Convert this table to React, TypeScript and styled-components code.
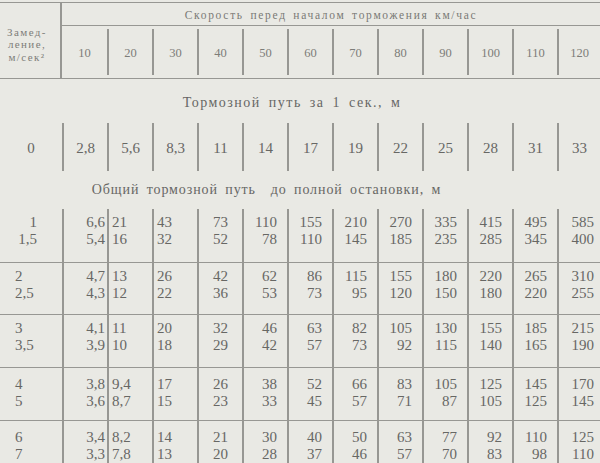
import React from "react";
import styled, { createGlobalStyle } from "styled-components";

const Global = createGlobalStyle`
  html, body { margin: 0; padding: 0; background: #e9e9e4; }
  body { width: 600px; height: 463px; overflow: hidden; }
`;

const COLS = "62px repeat(11, 45px) 43px";
const LINE = "#979793";
const INK = "#676764";

const Page = styled.div`
  width: 600px;
  height: 463px;
  overflow: hidden;
  background: #e9e9e4;
  color: ${INK};
  font-family: "Liberation Serif", "DejaVu Serif", serif;
`;

const Header = styled.div`
  margin-top: 2px;
  display: grid;
  grid-template-columns: ${COLS};
  grid-template-rows: 23px 52px;
  border-top: 1.5px solid ${LINE};
  border-bottom: 1.5px solid ${LINE};
`;

const DecelHead = styled.div`
  grid-row: 1 / 3;
  border-right: 2px solid ${LINE};
  display: flex;
  align-items: center;
  justify-content: center;
  text-align: center;
  font-size: 11px;
  line-height: 12.5px;
  letter-spacing: 1.4px;
  padding-top: 8px;
  padding-right: 6px;
  color: #7d7d79;
`;

const Title = styled.div`
  grid-column: 2 / 14;
  border-bottom: 1.5px solid ${LINE};
  display: flex;
  align-items: center;
  justify-content: center;
  font-size: 11.5px;
  letter-spacing: 1.7px;
  word-spacing: 2px;
  color: #7a7a76;
  padding-top: 2px;
`;

const SpeedCell = styled.div<{ $first?: boolean }>`
  border-left: ${(p) => (p.$first ? "none" : `2px solid ${LINE}`)};
  margin: 3px 0 3px;
  display: flex;
  align-items: center;
  justify-content: center;
  font-size: 12.5px;
  color: #7d7d79;
  padding-top: 2px;
`;

const Section = styled.div<{ $pt: number; $h: number; $shift: number; $ls: number }>`
  height: ${(p) => p.$h}px;
  padding-top: ${(p) => p.$pt}px;
  box-sizing: border-box;
  text-align: center;
  font-size: 14px;
  line-height: 18px;
  letter-spacing: ${(p) => p.$ls}px;
  word-spacing: 3px;
  padding-right: ${(p) => p.$shift}px;
`;

const ZeroRow = styled.div`
  display: grid;
  grid-template-columns: ${COLS};
  height: 48px;
`;

const ZeroCell = styled.div<{ $line: boolean }>`
  border-left: ${(p) => (p.$line ? `2px solid ${LINE}` : "none")};
  display: flex;
  align-items: center;
  justify-content: center;
  font-size: 15px;
  padding-top: 2px;
`;

const Group = styled.div<{ $last?: boolean; $h: number }>`
  display: grid;
  grid-template-columns: ${COLS};
  height: ${(p) => p.$h}px;
  box-sizing: border-box;
  border-bottom: ${(p) => (p.$last ? "none" : `1.5px solid ${LINE}`)};
`;

type Align = { side: "left" | "right"; pad: number };

const Cell = styled.div<{ $line: boolean; $side: "left" | "right"; $pad: number; $pt: number }>`
  border-left: ${(p) => (p.$line ? `2px solid ${LINE}` : "none")};
  padding-top: ${(p) => p.$pt}px;
  ${(p) => (p.$side === "left" ? `padding-left: ${p.$pad}px;` : `padding-right: ${p.$pad}px;`)}
  text-align: ${(p) => p.$side};
  font-size: 15px;
  line-height: 17px;
  white-space: pre;
`;

const SPEEDS = [10, 20, 30, 40, 50, 60, 70, 80, 90, 100, 110, 120];
const ZERO = ["2,8", "5,6", "8,3", "11", "14", "17", "19", "22", "25", "28", "31", "33"];

const GROUPS: { dec: [string, string]; decAlign: Align; vals: string[]; h: number; pt: number }[] = [
  {
    dec: ["1", "1,5"],
    decAlign: { side: "right", pad: 25 },
    h: 54,
    pt: 5,
    vals: ["6,6/5,4", "21/16", "43/32", "73/52", "110/78", "155/110", "210/145", "270/185", "335/235", "415/285", "495/345", "585/400"],
  },
  {
    dec: ["2", "2,5"],
    decAlign: { side: "left", pad: 15 },
    h: 52,
    pt: 5,
    vals: ["4,7/4,3", "13/12", "26/22", "42/36", "62/53", "86/73", "115/95", "155/120", "180/150", "220/180", "265/220", "310/255"],
  },
  {
    dec: ["3", "3,5"],
    decAlign: { side: "left", pad: 15 },
    h: 53,
    pt: 5,
    vals: ["4,1/3,9", "11/10", "20/18", "32/29", "46/42", "63/57", "82/73", "105/92", "130/115", "155/140", "185/165", "215/190"],
  },
  {
    dec: ["4", "5"],
    decAlign: { side: "left", pad: 15 },
    h: 53,
    pt: 8,
    vals: ["3,8/3,6", "9,4/8,7", "17/15", "26/23", "38/33", "52/45", "66/57", "83/71", "105/87", "125/105", "145/125", "170/145"],
  },
  {
    dec: ["6", "7"],
    decAlign: { side: "left", pad: 15 },
    h: 60,
    pt: 8,
    vals: ["3,4/3,3", "8,2/7,8", "14/13", "21/20", "30/28", "40/37", "50/46", "63/57", "77/70", "92/83", "110/98", "125/110"],
  },
];

const colAlign = (i: number): Align => {
  if (i === 0) return { side: "right", pad: 2 };
  if (i === 1) return { side: "left", pad: 3 };
  if (i === 2) return { side: "left", pad: 3 };
  if (i === 3) return { side: "right", pad: 14 };
  if (i === 11) return { side: "right", pad: 6 };
  return { side: "right", pad: 10 };
};

export default function App() {
  return (
    <Page>
      <Global />
      <Header>
        <DecelHead>
          Замед-
          <br />
          ление,
          <br />
          м/сек²
        </DecelHead>
        <Title>Скорость перед началом торможения км/час</Title>
        {SPEEDS.map((s, i) => (
          <SpeedCell key={s} $first={i === 0}>
            {s}
          </SpeedCell>
        ))}
      </Header>
      <Section $pt={15} $h={44} $shift={16} $ls={1.5}>
        Тормозной путь за 1 сек., м
      </Section>
      <ZeroRow>
        <ZeroCell $line={false}>0</ZeroCell>
        {ZERO.map((v, i) => (
          <ZeroCell key={i} $line>
            {v}
          </ZeroCell>
        ))}
      </ZeroRow>
      <Section $pt={10} $h={38} $shift={67} $ls={0.9}>
        Общий тормозной путь&nbsp; до полной остановки, м
      </Section>
      {GROUPS.map((g, gi) => (
        <Group key={gi} $h={g.h} $last={gi === GROUPS.length - 1}>
          <Cell $line={false} $side={g.decAlign.side} $pad={g.decAlign.pad} $pt={g.pt}>
            {g.dec[0]}
            {"\n"}
            {g.dec[1]}
          </Cell>
          {g.vals.map((v, i) => {
            const [a, b] = v.split("/");
            const al = colAlign(i);
            return (
              <Cell key={i} $line $side={al.side} $pad={al.pad} $pt={g.pt}>
                {a}
                {"\n"}
                {b}
              </Cell>
            );
          })}
        </Group>
      ))}
    </Page>
  );
}
